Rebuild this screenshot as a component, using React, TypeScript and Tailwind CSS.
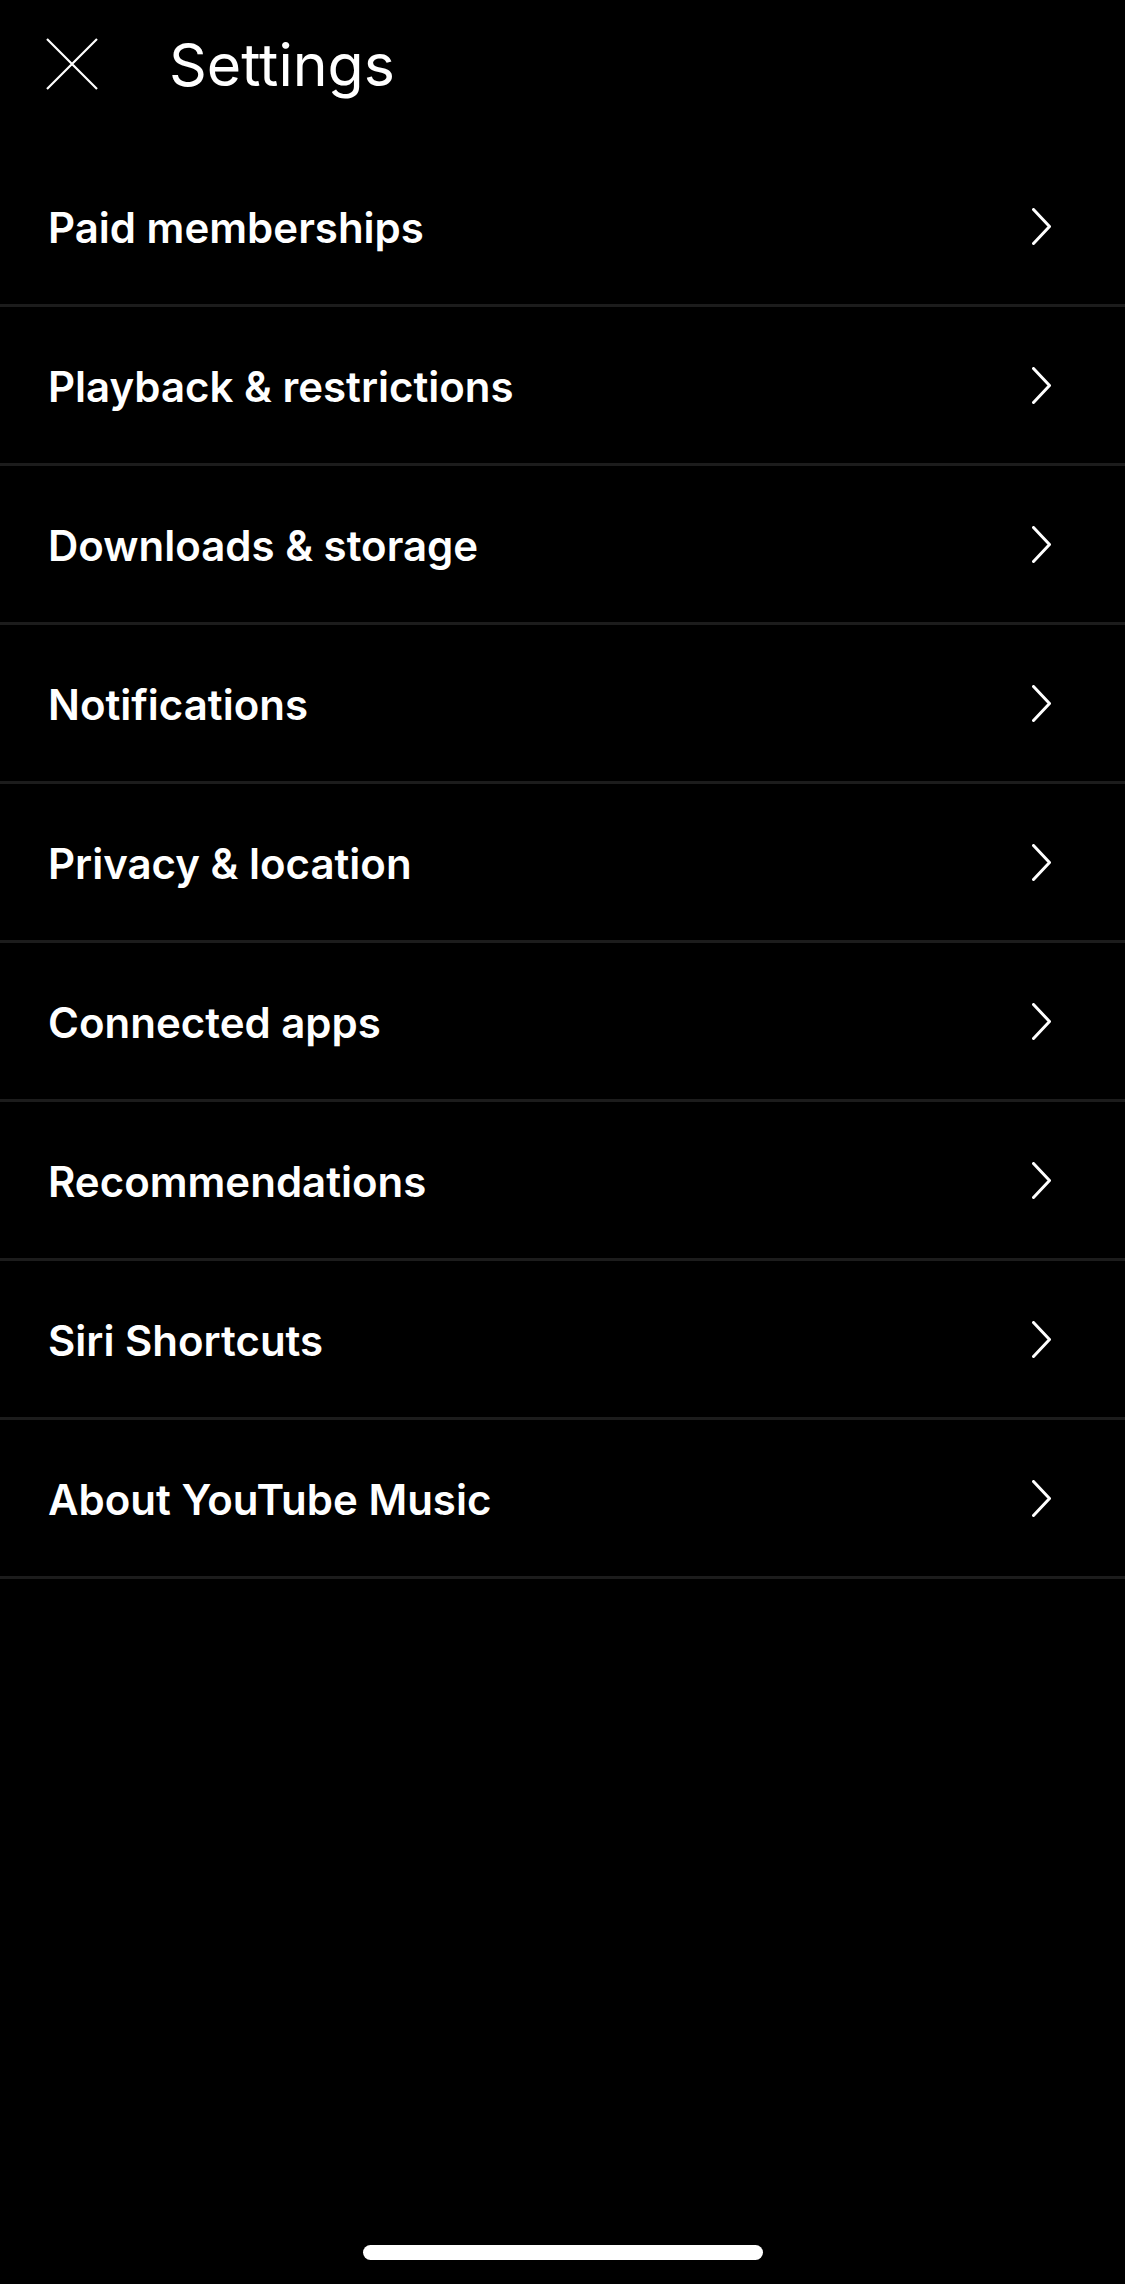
import React from 'react';

const items: string[] = [
    'Paid memberships',
    'Playback & restrictions',
    'Downloads & storage',
    'Notifications',
    'Privacy & location',
    'Connected apps',
    'Recommendations',
    'Siri Shortcuts',
    'About YouTube Music',
];

const CloseIcon = () => (
    <svg width="52" height="52" viewBox="0 0 52 52" fill="none">
        <path d="M1 1L51 51M51 1L1 51" stroke="white" strokeWidth="2.2" />
    </svg>
);

const Chevron = () => (
    <svg width="19" height="37" viewBox="0 0 19 37" fill="none">
        <polyline
            points="1.5,1.5 17.5,18.5 1.5,35.5"
            stroke="white"
            strokeWidth="3"
            strokeLinecap="round"
            strokeLinejoin="round"
        />
    </svg>
);

const SettingsRow: React.FC<{ label: string }> = ({ label }) => (
    <div className="flex items-center justify-between h-[159px] pl-[48px] pr-[74px] border-b-[3px] border-[#1c1c1c]">
        <span className="text-[42px] font-semibold text-white pt-[2px]">{label}</span>
        <Chevron />
    </div>
);

export default function App() {
    return (
        <div
            className="min-h-[2284px] w-full bg-black flex flex-col"
            style={{ fontFamily: 'Inter, Roboto, "Noto Sans", sans-serif' }}
        >
            {/* Header */}
            <header className="h-[148px] pb-[20px] flex items-center pl-[46px]">
                <CloseIcon />
                <h1 className="ml-[71px] text-[59px] font-normal text-white leading-none">Settings</h1>
            </header>

            {/* Settings list */}
            <nav className="flex flex-col">
                {items.map((item) => (
                    <SettingsRow key={item} label={item} />
                ))}
            </nav>

            {/* Home indicator */}
            <div className="mt-auto pb-[24px] flex justify-center">
                <div className="w-[400px] h-[15px] rounded-full bg-white" />
            </div>
        </div>
    );
}
